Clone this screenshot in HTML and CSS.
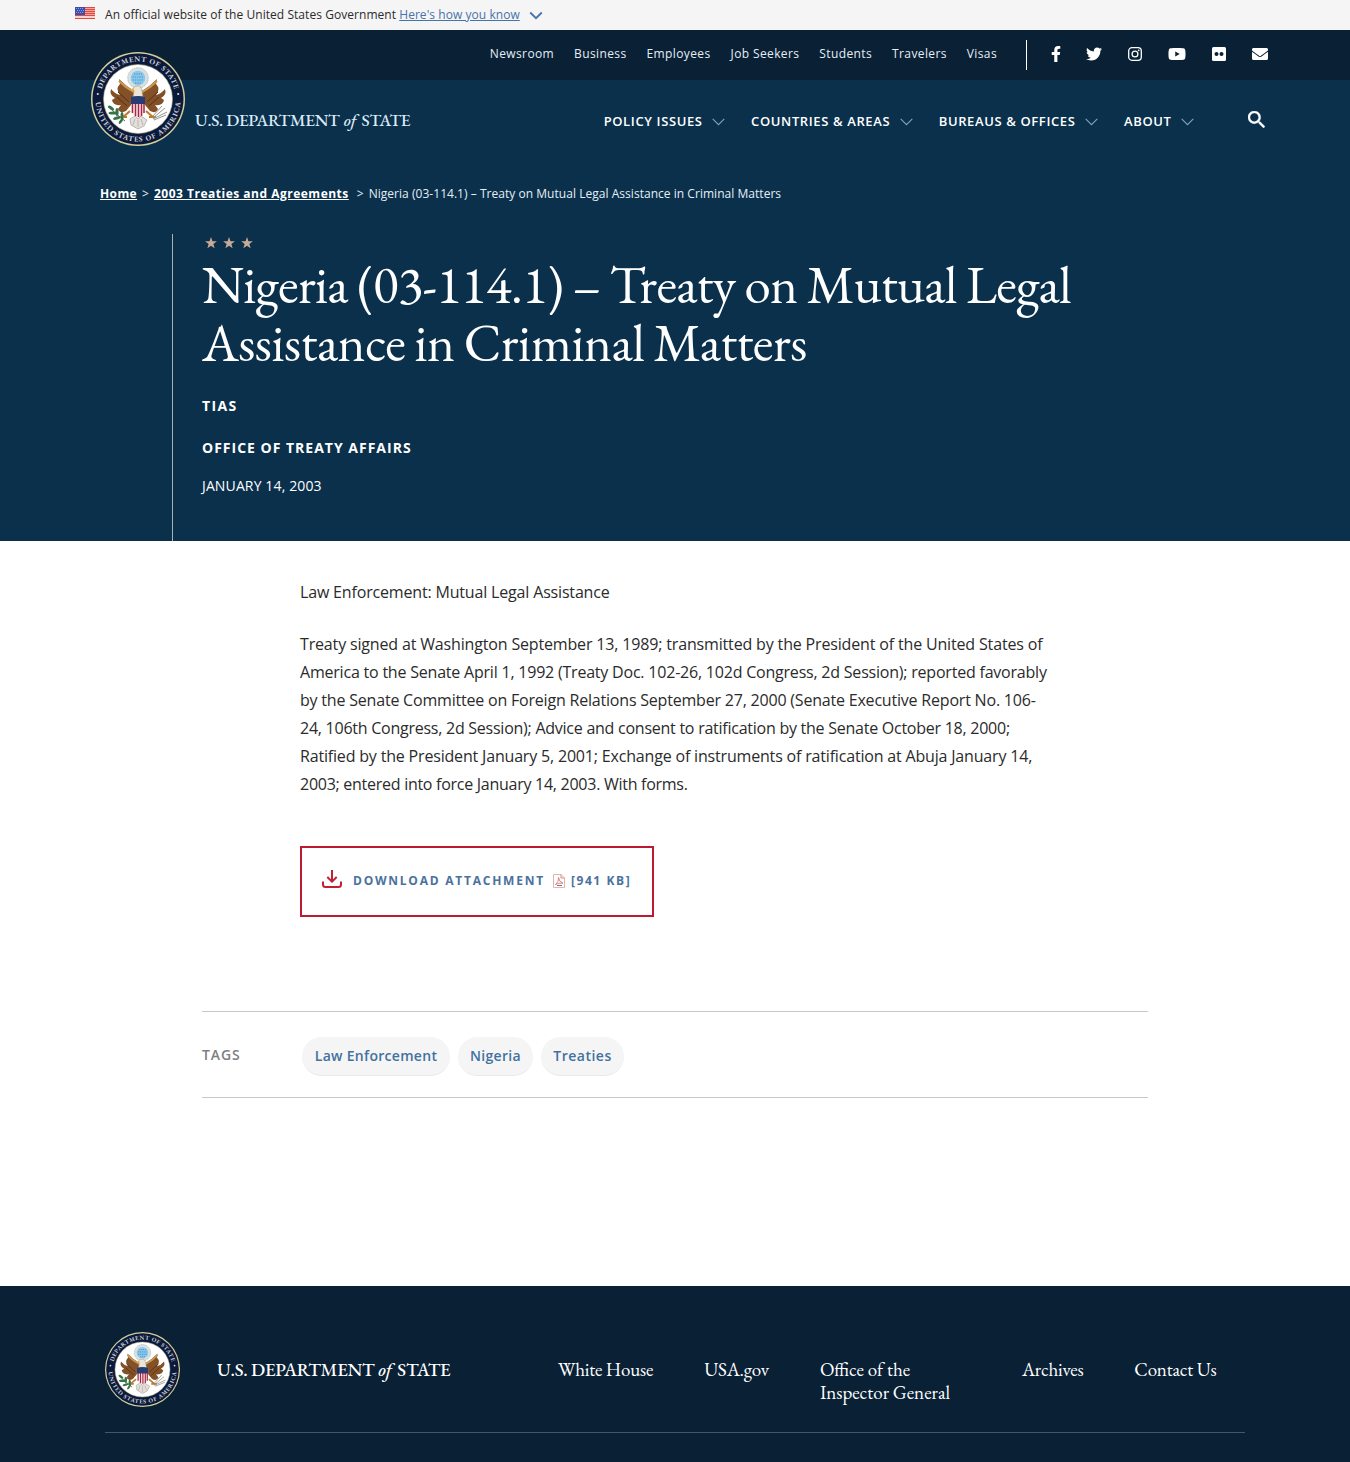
FILE: index.html
```html
<!DOCTYPE html>
<html lang="en">
<head>
<meta charset="utf-8">
<title>Nigeria (03-114.1) – Treaty on Mutual Legal Assistance in Criminal Matters</title>
<link rel="stylesheet" href="styles.css">
</head>
<body>
<svg class="defs" aria-hidden="true">
  <defs>
    <path id="arc-top" d="M9.500 47A37.500 37.500 0 0 1 84.500 47"/>
    <path id="arc-bottom" d="M4.400 47A42.600 42.600 0 0 0 89.600 47"/>
    <symbol id="seal" viewBox="0 0 94 94">
      <circle cx="47" cy="47" r="47" fill="#d5cf9c"/>
      <circle cx="47" cy="47" r="45.500" fill="#0b1a3a"/>
      <circle cx="47" cy="47" r="34.500" fill="#fff" stroke="#aaa987" stroke-width=".6"/>
      <g class="seal-text">
        <text textLength="98"><textPath href="#arc-top" startOffset="50%">DEPARTMENT OF STATE</textPath></text>
        <text textLength="127"><textPath href="#arc-bottom" startOffset="50%">UNITED STATES OF AMERICA</textPath></text>
      </g>
      <circle cx="6.800" cy="42" r="1.100" fill="#ddd"/><circle cx="87.200" cy="42" r="1.100" fill="#ddd"/>
      <circle cx="47" cy="26" r="10.300" fill="#d9e0df" stroke="#9ba9a8" stroke-width=".7" stroke-dasharray="1.500 .7"/>
      <circle cx="47" cy="26" r="7.300" fill="#8cc8ec"/>
      <path d="M43 22h8M41.500 25h11M41.500 28h11M44 31h6" stroke="#3f93c8" stroke-width="1.200" stroke-dasharray="1.300 1"/>
      <path d="M28 27Q35 34 43 39L44 48 35 59Q29 62 27 57L30 53Q22 54 21 48L24 46Q18 43 20 37 24 42 29 43 24 37 29 32z" fill="#845026"/>
      <path d="M66 27Q59 34 51 39L50 48 59 59Q65 62 67 57L64 53Q72 54 73 48L70 46Q76 43 74 37 70 42 65 43 70 37 65 32z" fill="#845026"/>
      <path d="M28 29Q35 36 43 40M66 29Q59 36 51 40" fill="none" stroke="#c99857" stroke-width="2.200"/>
      <path d="M27 40L38 50M26 45L36 54M67 40L56 50M68 45L58 54" stroke="#50301d" stroke-width="1"/>
      <path d="M43 39Q41 34 46 34 50 33 51 39L52 45H42z" fill="#ece4d7" stroke="#a29178" stroke-width=".6"/>
      <path d="M42 36l-3 2 4 1" fill="#e5b337"/>
      <path d="M40 46H54V60Q51 65 47 66 42 64 40 60z" fill="#f4edef"/>
      <path d="M41.500 51v10M44.500 51v13M47.500 51v14M50.500 51v13M53 51v10" stroke="#ad2440" stroke-width="1.500"/>
      <path d="M40 45Q47 43 54 45V52H40z" fill="#273c73"/>
      <path d="M39 59L31 66M55 59L63 66M36 65H30M58 65H65" stroke="#bc7b27" stroke-width="2"/>
      <path d="M34 69Q26 63 20 57" fill="none" stroke="#55763e"/>
      <g fill="#37724a"><ellipse cx="20" cy="56" rx="3.500" ry="1.600" transform="rotate(35 20 56)"/><ellipse cx="22" cy="61" rx="4.500" ry="1.600"/><ellipse cx="26" cy="60" rx="1.600" ry="4"/><ellipse cx="26" cy="66" rx="4" ry="1.500" transform="rotate(-15 26 66)"/><ellipse cx="31" cy="64" rx="1.500" ry="4"/><ellipse cx="30" cy="69" rx="3.500" ry="1.300" transform="rotate(-55 30 69)"/></g>
      <path d="M62 66L74 56M62 67L76 60M62 64L71 54M63 68L75 63" stroke="#96958a" stroke-width="1"/>
      <path d="M39 67L44 64 47 67 50 64 56 68 53 74 47 77 40 73z" fill="#e4dfda" stroke="#a49e98" stroke-width=".7"/>
      <path d="M44 67l-2 6M47 68v7M50 67l2 6" stroke="#aaa39d" stroke-width=".7"/>
    </symbol>
    <symbol id="chevron" viewBox="0 0 13 8"><path d="M.7 .8L6.500 6.600 12.300 .8" fill="none" stroke="currentColor" stroke-width="1.200"/></symbol>
    <symbol id="star" viewBox="0 0 12 12"><path d="M6 0l1.450 4.200 4.450.05-3.550 2.700L9.650 11.200 6 8.650 2.350 11.200 3.650 6.950.1 4.250l4.450-.05z"/></symbol>
  </defs>
</svg>

<div class="gov-banner">
  <svg class="flag" viewBox="0 0 20 12" preserveAspectRatio="none"><path fill="#fff" d="M0 0h20v12H0z"/><path d="M0 .5h20M0 2.500h20M0 4.500h20M0 6.500h20M0 8.500h20M0 11.300h20" stroke="#e0493f" stroke-width="1.300"/><path fill="#3d4fae" d="M0 0h10v8H0z"/><path d="M1 1.500h8M2 3.500h7M1 5.500h8" stroke="#8d9bdc" stroke-dasharray="1 1"/></svg>
  <span class="gov-text">An official website of the United States Government <a href="#">Here's how you know</a></span>
  <svg class="gov-chevron" viewBox="0 0 14 9"><path d="M1.200 1.500L7 7.200 12.800 1.500" fill="none" stroke="#4773aa" stroke-width="1.800"/></svg>
</div>

<header class="site-header">
  <a class="brand" href="#"><svg class="brand-seal"><use href="#seal"/></svg><span class="brand-name">U.S. DEPARTMENT <i>of</i> STATE</span></a>
  <div class="top-bar">
    <nav class="top-nav"><a href="#">Newsroom</a><a href="#">Business</a><a href="#">Employees</a><a href="#">Job Seekers</a><a href="#">Students</a><a href="#">Travelers</a><a href="#">Visas</a></nav>
    <div class="social">
      <svg class="s-fb" viewBox="0 0 320 512"><path d="M279.140 288l14.220-92.660h-88.910v-60.130c0-25.350 12.420-50.060 52.240-50.060h40.420V6.260S260.430 0 225.360 0c-73.220 0-121.080 44.380-121.080 124.720v70.620H22.890V288h81.390v224h100.170V288z"/></svg>
      <svg class="s-tw" viewBox="0 0 512 512"><path d="M459.370 151.716c.325 4.548.325 9.097.325 13.645 0 138.720-105.583 298.558-298.558 298.558-59.452 0-114.680-17.219-161.137-47.106 8.447.974 16.568 1.299 25.340 1.299 49.055 0 94.213-16.568 130.274-44.832-46.132-.975-84.792-31.188-98.112-72.772 6.498.974 12.995 1.624 19.818 1.624 9.421 0 18.843-1.300 27.614-3.573-48.081-9.747-84.143-51.980-84.143-102.985v-1.299c13.969 7.797 30.214 12.670 47.431 13.319-28.264-18.843-46.781-51.005-46.781-87.391 0-19.492 5.197-37.360 14.294-52.954 51.655 63.675 129.300 105.258 216.365 109.807-1.624-7.797-2.599-15.918-2.599-24.040 0-57.828 46.782-104.934 104.934-104.934 30.213 0 57.502 12.670 76.670 33.137 23.715-4.548 46.456-13.320 66.599-25.340-7.798 24.366-24.366 44.833-46.132 57.827 21.117-2.273 41.584-8.122 60.426-16.243-14.292 20.791-32.161 39.308-52.628 54.253z"/></svg>
      <svg class="s-ig" viewBox="0 0 14 14"><rect x=".7" y=".7" width="12.600" height="12.600" rx="3.300" fill="none" stroke="#fff" stroke-width="1.300"/><circle cx="7" cy="7" r="2.900" fill="none" stroke="#fff" stroke-width="1.300"/><circle cx="10.700" cy="3.300" r=".85"/></svg>
      <svg class="s-yt" viewBox="0 0 576 512"><path d="M549.655 124.083c-6.281-23.650-24.787-42.276-48.284-48.597C458.781 64 288 64 288 64S117.220 64 74.629 75.486c-23.497 6.322-42.003 24.947-48.284 48.597-11.412 42.867-11.412 132.305-11.412 132.305s0 89.438 11.412 132.305c6.281 23.650 24.787 41.500 48.284 47.821C117.220 448 288 448 288 448s170.780 0 213.371-11.486c23.497-6.321 42.003-24.171 48.284-47.821 11.412-42.867 11.412-132.305 11.412-132.305s0-89.438-11.412-132.305zm-317.510 213.508V175.185l142.739 81.205-142.739 81.201z"/></svg>
      <svg class="s-fl" viewBox="0 0 14 14"><rect width="14" height="14" rx="1.500"/><circle cx="4.500" cy="7" r="2" fill="#092035"/><circle cx="9.500" cy="7" r="2" fill="#092035"/></svg>
      <svg class="s-em" viewBox="0 0 512 512"><path d="M502.300 190.800c3.900-3.100 9.700-.2 9.700 4.700V400c0 26.500-21.500 48-48 48H48c-26.500 0-48-21.500-48-48V195.600c0-5 5.700-7.800 9.700-4.700 22.400 17.400 52.100 39.500 154.100 113.600 21.100 15.400 56.700 47.800 92.200 47.600 35.700.3 72-32.800 92.300-47.600 102-74.100 131.600-96.300 154-113.700zM256 320c23.200.4 56.600-29.200 73.400-41.400 132.700-96.300 142.800-104.700 173.400-128.700 5.800-4.500 9.200-11.500 9.200-18.900v-19c0-26.500-21.500-48-48-48H48c-26.500 0-48 21.500-48 48v19c0 7.400 3.400 14.300 9.200 18.900 30.600 23.900 40.700 32.400 173.400 128.700 16.800 12.200 50.200 41.800 73.400 41.400z"/></svg>
    </div>
  </div>
  <div class="main-bar">
    <nav class="main-nav">
      <a href="#">POLICY ISSUES<svg><use href="#chevron"/></svg></a><a href="#">COUNTRIES &amp; AREAS<svg><use href="#chevron"/></svg></a><a href="#">BUREAUS &amp; OFFICES<svg><use href="#chevron"/></svg></a><a href="#">ABOUT<svg><use href="#chevron"/></svg></a>
    </nav>
    <svg class="search" viewBox="3 3 17.500 17.500"><path fill="#fff" stroke="#fff" stroke-width=".4" d="M15.500 14h-.79l-.28-.27C15.410 12.590 16 11.110 16 9.500 16 5.910 13.090 3 9.500 3S3 5.910 3 9.500 5.910 16 9.500 16c1.610 0 3.090-.59 4.230-1.570l.27.28v.79l5 4.990L20.490 19l-4.990-5zm-6 0C7.010 14 5 11.990 5 9.500S7.010 5 9.500 5 14 7.010 14 9.500 11.990 14 9.500 14z"/></svg>
  </div>
</header>

<section class="hero">
  <nav class="breadcrumb"><a class="bc-home" href="#">Home</a><span class="sep">&gt;</span><a class="bc-parent" href="#">2003 Treaties and Agreements</a><span class="sep sep-wide">&gt;</span><span class="bc-current">Nigeria (03-114.1) – Treaty on Mutual Legal Assistance in Criminal Matters</span></nav>
  <div class="hero-body">
    <div class="stars"><svg><use href="#star"/></svg><svg><use href="#star"/></svg><svg><use href="#star"/></svg></div>
    <h1><span class="title-a">Nigeria (03-114.1) – Treaty on Mutual Legal</span> <span class="title-b">Assistance in Criminal Matters</span></h1>
    <p class="kind">TIAS</p>
    <p class="office">OFFICE OF TREATY AFFAIRS</p>
    <p class="date">JANUARY 14, 2003</p>
  </div>
</section>

<main>
  <article class="content">
    <p>Law Enforcement: Mutual Legal Assistance</p>
    <p class="treaty"><span>Treaty signed at Washington September 13, 1989; transmitted by the President of the United States of</span> <span>America to the Senate April 1, 1992 (Treaty Doc. 102-26, 102d Congress, 2d Session); reported favorably</span> <span>by the Senate Committee on Foreign Relations September 27, 2000 (Senate Executive Report No. 106-</span><span>24, 106th Congress, 2d Session); Advice and consent to ratification by the Senate October 18, 2000;</span> <span>Ratified by the President January 5, 2001; Exchange of instruments of ratification at Abuja January 14,</span> <span>2003; entered into force January 14, 2003. With forms.</span></p>
    <a class="download" href="#">
      <svg class="dl-icon" viewBox="0 0 20 18"><path d="M10 0v11M5.300 7L10 11.700 14.700 7M1 11.500v3Q1 17 3.500 17H16.500Q19 17 19 14.500V11.500" fill="none" stroke="#c22033" stroke-width="2"/></svg>
      <span class="dl-label">DOWNLOAD ATTACHMENT</span>
      <svg class="pdf-icon" viewBox="0 0 12 14"><path d="M.5 .5h7.500l3.500 3.500v9.500H.5z" fill="#fff" stroke="#e3b5b0"/><path d="M8 .5v3.500h3.500" fill="none" stroke="#d98783"/><path d="M2.500 10.500Q6 8 5.500 3.500 6 8 10 9.200 6 8.500 2.500 10.500" fill="none" stroke="#d26a66" stroke-width=".8"/><path d="M4 11.500h5" stroke="#777"/></svg>
      <span class="dl-size">[941 KB]</span>
    </a>
  </article>
  <section class="tags"><span class="tags-label">TAGS</span><a class="tag tag-law" href="#">Law Enforcement</a><a class="tag tag-nigeria" href="#">Nigeria</a><a class="tag tag-treaties" href="#">Treaties</a></section>
</main>

<footer>
  <div class="footer-inner">
    <svg class="footer-seal"><use href="#seal"/></svg>
    <span class="footer-name">U.S. DEPARTMENT <i>of</i> STATE</span>
    <nav class="footer-nav"><a href="#">White House</a><a href="#">USA.gov</a><a class="oig" href="#">Office of the<br>Inspector General</a><a href="#">Archives</a><a href="#">Contact Us</a></nav>
  </div>
</footer>
</body>
</html>
```
FILE: styles.css
```css
* { box-sizing: border-box; }
body { margin: 0; width: 1350px; height: 1462px; overflow: hidden; background: #fff; color: #2b2b2b; font-family: "Open Sans", "Noto Sans", sans-serif; display: flex; flex-direction: column; }
a { color: inherit; text-decoration: none; white-space: nowrap; }
p, h1 { margin: 0; }
svg { display: block; flex: none; }
.defs { position: absolute; width: 0; height: 0; }
.seal-text { font: bold 7.500px "EB Garamond", "Liberation Serif", serif; fill: #c9cdd6; text-anchor: middle; }

.gov-banner { height: 30px; flex: none; background: #f5f5f5; display: flex; align-items: center; padding: 0 0 2px 75px; font-size: 12px; letter-spacing: .05px; white-space: nowrap; }
.flag { width: 20px; height: 12px; margin: -2px 10px 0 0; }
.gov-banner a { color: #4773aa; text-decoration: underline; }
.gov-chevron { width: 14px; height: 9px; margin: 3px 0 0 9px; }

.site-header { position: relative; flex: none; background: #0a304c; color: #fff; }
.brand { position: absolute; left: 91px; top: 22px; display: flex; align-items: center; }
.brand-seal { width: 94px; height: 94px; }
.brand-name { font: 500 17.200px/24px "EB Garamond", "Liberation Serif", serif; color: #dceaf7; margin: 42px 0 0 10px; letter-spacing: -.3px; }
.brand-name i { margin: 0 2px 0 1px; }
.top-bar { height: 50px; background: #092035; display: flex; justify-content: flex-end; align-items: center; padding-right: 82px; }
.top-nav { display: flex; gap: 20px; font-size: 12px; letter-spacing: .38px; margin: -4px 29px 0 0; color: #e6eef5; }
.social { height: 30px; border-left: 1px solid #fff; display: flex; align-items: center; width: 242px; padding: 0 0 2px 24px; fill: #fff; }
.s-fb { width: 10px; height: 16px; }
.s-tw { width: 16px; height: 16px; margin-left: 25px; }
.s-ig { width: 14px; height: 14px; margin-left: 26px; }
.s-yt { width: 18px; height: 16px; margin-left: 26px; }
.s-fl { width: 14px; height: 14px; margin-left: 26px; }
.s-em { width: 16px; height: 16px; margin-left: 26px; }
.main-bar { height: 83px; display: flex; align-items: center; justify-content: flex-end; padding-right: 85px; }
.main-nav { display: flex; gap: 26px; font-size: 13px; font-weight: 600; letter-spacing: .62px; margin: -2px 54px 0 0; }
.main-nav a { display: flex; align-items: center; }
.main-nav svg { width: 13px; height: 8px; margin: 2px 0 0 9.500px; color: #7d9fba; }
.search { width: 17px; height: 17px; margin-top: -4px; }

.hero { height: 378px; flex: none; background: #0a304c; color: #fff; padding-top: 20px; }
.breadcrumb { height: 20px; display: flex; align-items: center; padding-left: 100px; font-size: 12px; white-space: nowrap; color: #e6eef5; }
.breadcrumb a { font-weight: 700; text-decoration: underline; color: #fff; }
.bc-home { letter-spacing: .4px; }
.bc-parent { letter-spacing: .5px; }
.bc-current { letter-spacing: .035px; }
.sep { margin: 0 5px; }
.sep-wide { margin-left: 8px; }
.hero-body { height: 307px; margin: 31px 0 0 172px; border-left: 1px solid #a9b1b5; padding: 2px 0 0 29px; }
.stars { display: flex; gap: 6px; padding-left: 3px; fill: #c9aa98; height: 14px; align-items: center; }
.stars svg { width: 12px; height: 12px; }
h1 { font: 400 53px/58px "EB Garamond", "Liberation Serif", serif; margin-top: 6px; white-space: nowrap; }
h1 span { display: block; }
.title-a { letter-spacing: -.68px; word-spacing: -.7px; }
.title-b { letter-spacing: -.46px; word-spacing: -1px; }
.kind, .office { font-size: 14px; line-height: 20px; font-weight: 700; letter-spacing: 1px; }
.kind { margin-top: 24px; letter-spacing: 1.400px; }
.office { margin-top: 22px; }
.date { font-size: 14px; line-height: 20px; margin-top: 18px; letter-spacing: .13px; }

main { height: 745px; flex: none; padding: 37px 202px 0; }
.content { padding-left: 98px; font-size: 16px; line-height: 28px; letter-spacing: -.17px; white-space: nowrap; }
.content p { margin-bottom: 24px; }
.treaty span { display: block; letter-spacing: -.2px; }
.treaty span:nth-child(1) { letter-spacing: -.16px; }
.treaty span:nth-child(2) { letter-spacing: -.21px; }
.treaty span:nth-child(4) { letter-spacing: -.25px; }
.treaty span:nth-child(5) { letter-spacing: -.18px; }
.treaty span:nth-child(6) { letter-spacing: -.27px; }
.download { display: flex; width: 354px; height: 71px; border: 2px solid #bd1a31; margin-top: 48px; padding: 0 0 2px 20px; align-items: center; color: #4a729e; font-size: 12px; font-weight: 700; letter-spacing: 1.760px; }
.dl-icon { width: 20px; height: 18px; margin: -4px 11px 0 0; }
.dl-size { letter-spacing: 1.600px; }
.pdf-icon { width: 12px; height: 14px; margin: 0 6px 0 8px; }
.tags { height: 87px; margin-top: 94px; border: solid #c3c9cb; border-width: 1px 0; display: flex; align-items: center; font-size: 14px; font-weight: 600; }
.tags-label { color: #7e8080; width: 100px; letter-spacing: .9px; }
.tag { height: 39px; line-height: 38px; border-radius: 20px; background: #f5f5f5; border-bottom: 1px solid #e9e9e9; color: #42719f; text-align: center; margin-right: 8px; margin-top: 3px; letter-spacing: .3px; }
.tag-law { width: 148px; }
.tag-nigeria { width: 75px; }
.tag-treaties { width: 83px; letter-spacing: .5px; }

footer { height: 176px; flex: none; background: #092035; color: #fff; padding: 46px 105px 0; }
.footer-inner { height: 101px; border-bottom: 1px solid #435768; display: flex; align-items: flex-start; }
.footer-seal { width: 75px; height: 75px; margin-right: 1px; }
.footer-name { width: 341px; padding-left: 36px; margin-top: 26px; font: 500 18.600px/23px "EB Garamond", "Liberation Serif", serif; letter-spacing: -.25px; white-space: nowrap; }
.footer-name i { margin-right: 2px; }
.footer-nav { display: flex; gap: 51px; margin: 26px 0 0 36px; font: 19px/23px "EB Garamond", "Liberation Serif", serif; letter-spacing: -.2px; }
.footer-nav .oig { width: 151px; letter-spacing: 0; }
```
